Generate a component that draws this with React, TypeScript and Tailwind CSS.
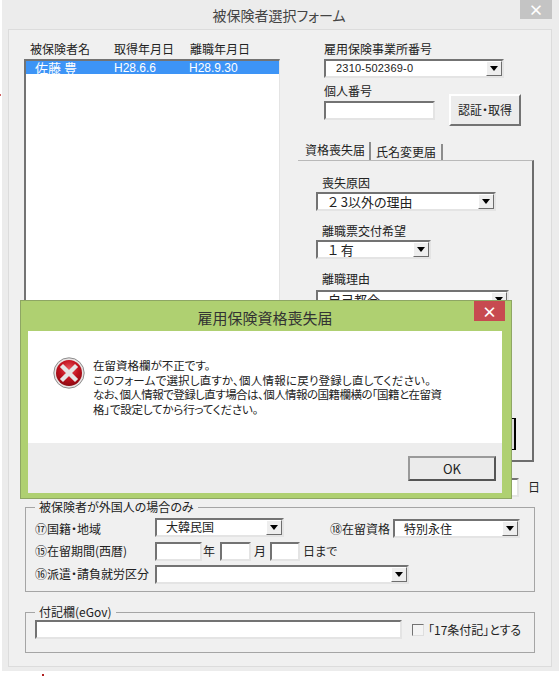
const fontClass = "font-['Noto_Sans_CJK_JP','Liberation_Sans',sans-serif] [font-feature-settings:'palt']";

function Caret() {
  return <span className="h-0 w-0 border-x-[4px] border-t-[5px] border-x-transparent border-t-black" />;
}

function Field({ className, text }: { className: string; text?: string }) {
  return (
    <div className={`flex items-center border-2 border-t-[#737373] border-l-[#737373] border-r-[#e4e4e4] border-b-[#e4e4e4] bg-white pl-2 leading-none text-[#222] ${className}`}>
      {text}
    </div>
  );
}

function Combo({ className, text }: { className: string; text?: string }) {
  return (
    <div className={`flex items-center border-2 border-t-[#737373] border-l-[#737373] border-r-[#e4e4e4] border-b-[#e4e4e4] bg-white leading-none text-[#222] ${className}`}>
      <span className="flex-1 whitespace-nowrap">{text}</span>
      <span className="flex h-[15px] w-[16px] shrink-0 items-center justify-center border border-t-white border-l-white border-r-[#6d6d6d] border-b-[#6d6d6d] bg-[#eeeeee]">
        <Caret />
      </span>
    </div>
  );
}

function ErrorIcon() {
  return (
    <svg width="32" height="32" viewBox="0 0 32 32" className="shrink-0">
      <defs>
        <radialGradient id="errFill" cx="50%" cy="35%" r="65%">
          <stop offset="0%" stopColor="#e8545c" />
          <stop offset="55%" stopColor="#c2121f" />
          <stop offset="100%" stopColor="#8c0a12" />
        </radialGradient>
      </defs>
      <circle cx="16" cy="16" r="15.2" fill="#e9e3e3" stroke="#8d8d8d" strokeWidth="1" />
      <circle cx="16" cy="16" r="13" fill="url(#errFill)" />
      <path d="M10 10 L22 22 M22 10 L10 22" stroke="#e6e6e6" strokeWidth="4.4" strokeLinecap="square" />
    </svg>
  );
}

function MainForm() {
  return (
    <div className="flex">
      <div className="ml-[15px] w-[256px] shrink-0">
        <div className="mt-[11px] flex h-[18px] items-center pb-[2px] text-[12px] leading-none text-[#222]">
          <span className="ml-[6px] w-[84px]">被保険者名</span>
          <span className="w-[76px]">取得年月日</span>
          <span>離職年月日</span>
        </div>
        <div className="h-[250px] border-t-2 border-l-2 border-r border-t-[#737373] border-l-[#737373] border-r-[#e4e4e4] bg-white">
          <div className="flex h-[13px] items-center bg-[#3d94f6] text-[12px] leading-none text-white">
            <span className="ml-[9px] w-[79px] text-[13px]">佐藤 豊</span>
            <span className="w-[75px] font-['Liberation_Sans',sans-serif]">H28.6.6</span>
            <span className="font-['Liberation_Sans',sans-serif]">H28.9.30</span>
          </div>
        </div>
      </div>

      <div className="ml-[18px] flex-1">
        <div className="ml-[26px] mt-[11px] h-[18px] text-[12px] leading-[16px] text-[#222]">雇用保険事業所番号</div>
        <Combo className="ml-[26px] h-[19px] w-[180px] pl-[10px] font-['Liberation_Sans',sans-serif] text-[11px] tracking-[0.2px]" text="2310-502369-0" />
        <div className="ml-[26px] flex h-[47px] w-[197px] items-start justify-between">
          <div>
            <div className="mt-[5px] h-[18px] text-[12px] leading-[16px] text-[#222]">個人番号</div>
            <Field className="h-[19px] w-[111px]" />
          </div>
          <div className="mt-[16px] flex h-[32px] w-[72px] items-center justify-center border-2 border-t-white border-l-white border-r-[#737373] border-b-[#737373] bg-[#ececec] text-[12px] leading-none text-[#222]">
            認証・取得
          </div>
        </div>

        <div className="mt-[17px] flex h-[18px] text-[12px] leading-none text-[#222]">
          <span className="ml-[6px] flex h-[18px] w-[67px] items-start border-r-2 border-r-[#8c8c8c] pl-[1px] pt-[2px]">資格喪失届</span>
          <span className="mt-[2px] flex h-[16px] w-[72px] items-center justify-center border-r-2 border-r-[#8c8c8c]">氏名変更届</span>
        </div>
        <div className="h-[302px] w-[236px] border-r-2 border-b-2 border-t border-t-[#b9b9b9] border-r-[#6d6d6d] border-b-[#6d6d6d] pl-[18px]">
          <div className="ml-[6px] mt-[13px] h-[18px] text-[12px] leading-[18px] text-[#222]">喪失原因</div>
          <Combo className="h-[19px] w-[180px] pl-[10px] text-[13px]" text="２ 3以外の理由" />
          <div className="ml-[6px] mt-[11px] h-[18px] text-[12px] leading-[18px] text-[#222]">離職票交付希望</div>
          <Combo className="h-[19px] w-[115px] pl-[10px] text-[13px]" text="１ 有" />
          <div className="mb-[2px] ml-[6px] mt-[11px] h-[18px] text-[12px] leading-[18px] text-[#222]">離職理由</div>
          <Combo className="h-[19px] w-[193px] pl-[10px] text-[13px]" text="自己都合" />
          <div className="ml-[196px] mt-[109px] h-[32px] w-[4px] border-y border-r-2 border-black bg-[#dcdcdc]" />
        </div>
        <div className="flex h-[38px] items-start justify-end pr-[11px] pt-[16px]">
          <Field className="mr-[9px] h-[19px] w-[30px]" />
          <span className="mt-[3px] text-[12px] leading-none text-[#222]">日</span>
        </div>
      </div>
    </div>
  );
}

function ForeignerGroup() {
  return (
    <fieldset className="mx-[16px] h-[92px] border border-[#a5a5a5] pl-[9px]">
      <legend className="px-[4px] text-[12px] leading-[14px] text-[#222]">被保険者が外国人の場合のみ</legend>
      <div className="mt-[2px] flex h-[22px] items-center whitespace-nowrap text-[12px] leading-none text-[#222]">
        <span className="w-[120px] pt-[3px]">⑰国籍・地域</span>
        <Combo className="h-[19px] w-[129px] pl-[9px] text-[12px]" text="大韓民国" />
        <span className="ml-[46px] w-[63px] pt-[3px]">⑱在留資格</span>
        <Combo className="mt-[3px] h-[19px] w-[127px] pl-[9px] text-[12px]" text="特別永住" />
      </div>
      <div className="mt-[3px] flex h-[20px] items-center whitespace-nowrap text-[12px] leading-none text-[#222]">
        <span className="w-[120px]">⑮在留期間(西暦)</span>
        <Field className="h-[19px] w-[47px]" />
        <span className="ml-[1px] w-[17px]">年</span>
        <Field className="h-[19px] w-[31px]" />
        <span className="ml-[3px] w-[16px]">月</span>
        <Field className="h-[19px] w-[30px]" />
        <span className="ml-[3px]">日まで</span>
      </div>
      <div className="mt-[3px] flex h-[20px] items-center whitespace-nowrap text-[12px] leading-none text-[#222]">
        <span className="w-[120px]">⑯派遣・請負就労区分</span>
        <Combo className="h-[19px] w-[254px]" />
      </div>
    </fieldset>
  );
}

function NoteGroup() {
  return (
    <fieldset className="mx-[16px] mt-[13px] h-[48px] border border-[#a5a5a5] pl-[9px]">
      <legend className="px-[4px] text-[12px] leading-[14px] text-[#222]">付記欄(eGov)</legend>
      <div className="mt-[1px] flex items-center whitespace-nowrap text-[12px] leading-none text-[#222]">
        <Field className="h-[19px] w-[367px]" />
        <span className="ml-[10px] h-[12px] w-[12px] border border-t-[#737373] border-l-[#737373] border-r-[#dedede] border-b-[#dedede] bg-[#f4f4f4]" />
        <span className="ml-[4px]">「17条付記」とする</span>
      </div>
    </fieldset>
  );
}

function ErrorDialog() {
  return (
    <div className="absolute left-[20px] top-[300px] flex h-[199px] w-[492px] flex-col border border-[#8ea664] bg-[#afd071] pb-[5px] pl-[7px] pr-[9px]">
      <div className="relative flex h-[30px] shrink-0 items-center justify-center pt-[2px] text-[15px] leading-none text-[#333]">
        雇用保険資格喪失届
        <span className="absolute right-[-3px] top-0 flex h-[20px] w-[31px] items-center justify-center bg-[#c74b50] text-[15px] font-bold leading-none text-white">×</span>
      </div>
      <div className="flex-1 bg-white">
        <div className="flex h-[112px] items-start pl-[25px] pt-[26px]">
          <ErrorIcon />
          <div className="ml-[8px] mt-[1px] whitespace-nowrap text-[11.5px] leading-[14.6px] text-[#222]">
            <p>在留資格欄が不正です。</p>
            <p className="tracking-[0.2px]">このフォームで選択し直すか、個人情報に戻り登録し直してください。</p>
            <p className="tracking-[-0.55px]">なお、個人情報で登録し直す場合は、個人情報の国籍欄横の「国籍と在留資</p>
            <p className="tracking-[-0.2px]">格」で設定してから行ってください。</p>
          </div>
        </div>
        <div className="flex h-[50px] items-start justify-end bg-[#ededed] pr-[6px] pt-[13px]">
          <div className="flex h-[25px] w-[88px] items-center justify-center border-2 border-t-[#9a9a9a] border-l-[#9a9a9a] border-r-[#555] border-b-[#555] bg-[#ebebeb] text-[13px] leading-none text-[#222]">
            OK
          </div>
        </div>
      </div>
    </div>
  );
}

export default function App() {
  return (
    <div className={`relative h-[676px] w-[559px] overflow-hidden bg-white ${fontClass}`}>
      <div className="ml-[2px] flex h-[671px] flex-col bg-[#ececec]">
        <div className="relative flex h-[29px] shrink-0 items-center justify-center pr-[3px] text-[14px] leading-none text-[#444]">
          被保険者選択フォーム
          <span className="absolute left-[518px] top-0 flex h-[19px] w-[32px] items-center justify-center bg-[#c4c4c4] text-[15px] font-bold leading-none text-white">×</span>
        </div>
        <div className="ml-[6px] mr-[7px] h-[638px] border border-[#dcdcdc] bg-[#f0f0f0]">
          <MainForm />
          <ForeignerGroup />
          <NoteGroup />
        </div>
      </div>
      <ErrorDialog />
      <span className="absolute left-0 top-[94px] h-[2px] w-[1px] bg-[#d06060]" />
      <span className="absolute left-[42px] top-[674px] h-[2px] w-[2px] bg-[#b02020]" />
    </div>
  );
}
